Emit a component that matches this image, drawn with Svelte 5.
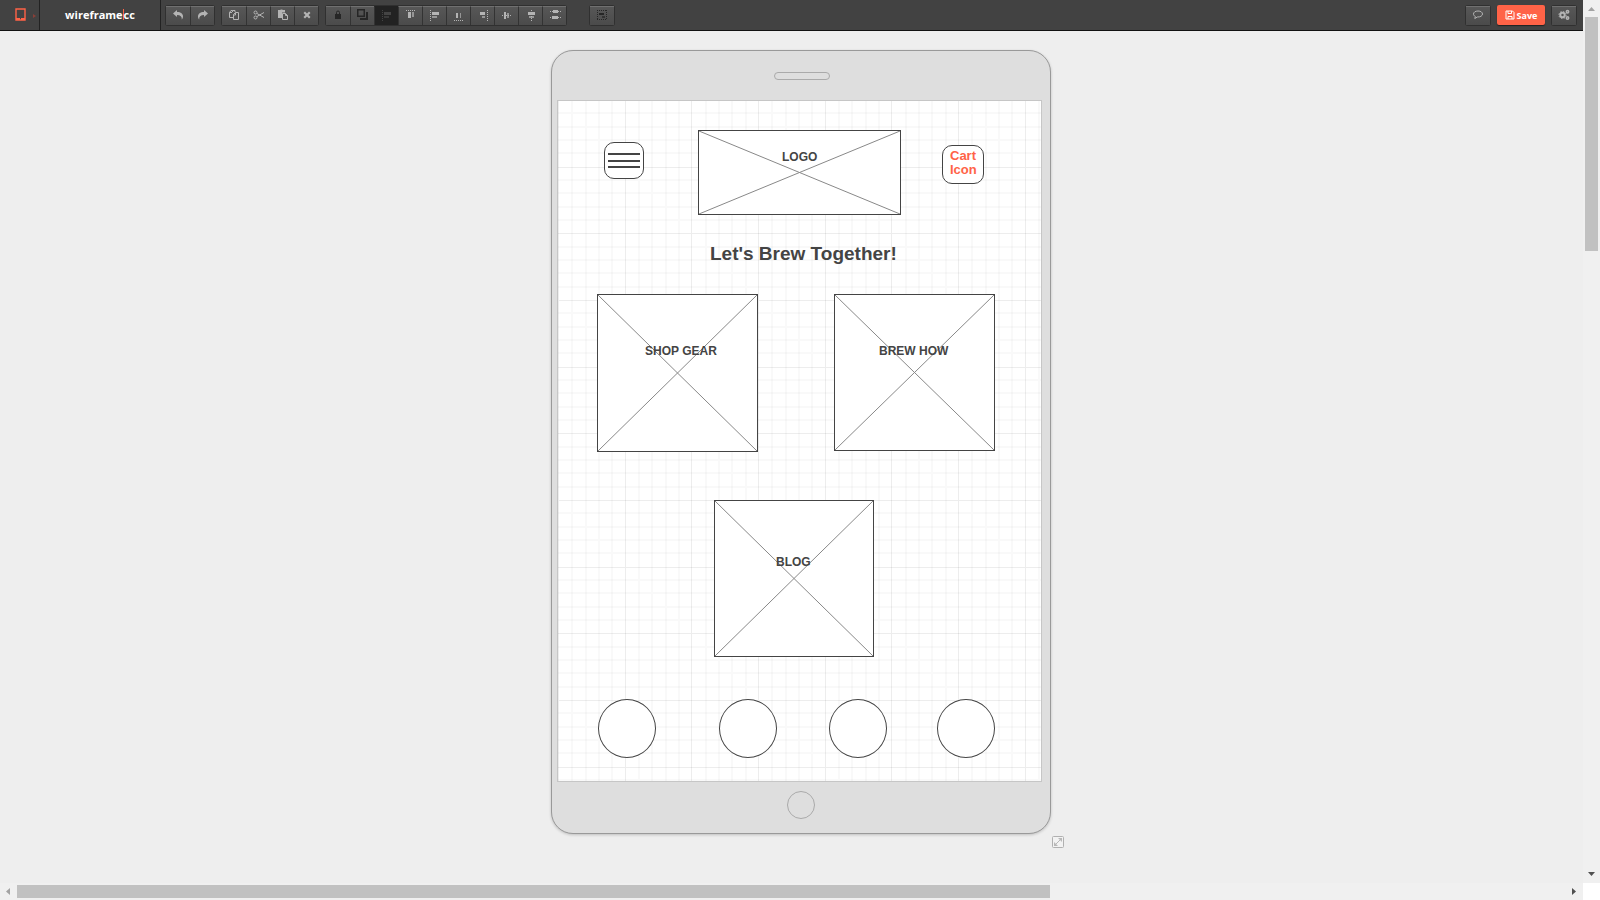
<script>
  const history = [
    { name: 'Undo', icon: 'undo' },
    { name: 'Redo', icon: 'redo' },
  ];
  const edit = [
    { name: 'Duplicate', icon: 'duplicate' },
    { name: 'Cut', icon: 'cut' },
    { name: 'Paste', icon: 'paste' },
    { name: 'Delete', icon: 'remove' },
  ];
  const arrange = [
    { name: 'Lock', icon: 'lock', off: true },
    { name: 'Bring to front', icon: 'layers', off: true },
    { name: 'Snap', icon: 'left', active: true },
    { name: 'Align top', icon: 'top' },
    { name: 'Align left', icon: 'left' },
    { name: 'Align bottom', icon: 'bottom' },
    { name: 'Align right', icon: 'right' },
    { name: 'Align middle', icon: 'middle' },
    { name: 'Align center', icon: 'center' },
    { name: 'Distribute', icon: 'distribute' },
  ];
  const group = [{ name: 'Group', icon: 'group', off: true }];
  const groups = [history, edit, arrange, group];

  const images = [
    { label: 'LOGO', x: 140, y: 29, w: 203, h: 85, tx: 83, ty: 19 },
    { label: 'SHOP GEAR', x: 39, y: 193, w: 161, h: 158, tx: 47, ty: 49 },
    { label: 'BREW HOW', x: 276, y: 193, w: 161, h: 157, tx: 44, ty: 49 },
    { label: 'BLOG', x: 156, y: 399, w: 160, h: 157, tx: 61, ty: 54 },
  ];
  const circles = [40, 161, 271, 379];

  const tile = 200;
  const minor = [13, 27, 40, 53, 80, 93, 107, 120, 147, 160, 173, 187];
  const major = [0, 67, 133];
</script>

{#snippet glyph(name)}
  <svg class="glyph" viewBox="0 0 12 12" aria-hidden="true">
    {#if name === 'undo'}
      <path d="M1 4.500 5 1v2c4 0 6 2 6 4.500 0 1.400-.6 2.300-1.200 3C10 7.500 8.500 6 5 6v2z" />
    {:else if name === 'redo'}
      <path d="M11 4.500 7 1v2C3 3 1 5 1 7.500c0 1.400.6 2.300 1.200 3C2 7.500 3.500 6 7 6v2z" />
    {:else if name === 'duplicate'}
      <path class="line" d="M4.500 3V1.500H3L1.500 3.500v5H5M1.500 3.500h2.500M5.500 5.500 7.500 3.500h3v7h-5zM5.500 6h2V3.500M4.500 1.500H7V3" />
    {:else if name === 'cut'}
      <path class="line" d="M4 4.500 11 8.500M4 7.500 11 3.500" />
      <circle class="line" cx="2.500" cy="3.500" r="1.500" /><circle class="line" cx="2.500" cy="8.500" r="1.500" />
    {:else if name === 'paste'}
      <path d="M1 1h2.500V0.500h2V1H8v2.500H5V9H1z" />
      <path class="line" d="M5.500 4.500h3l2 2v4h-5zM8.500 4.500v2h2" />
    {:else if name === 'remove'}
      <path d="M2.500 4 4 2.500l2 2 2-2L9.500 4l-2 2 2 2L8 9.500l-2-2-2 2L2.500 8l2-2z" />
    {:else if name === 'lock'}
      <path d="M3 5h6v5H3z" /><path class="line" d="M4.500 5V3.500a1.500 1.500 0 0 1 3 0V5" />
    {:else if name === 'layers'}
      <path d="M9 3h2v8H3V9h6z" /><path d="M0 0h8v8H0zM1.500 1.500v5h5v-5z" fill-rule="evenodd" />
    {:else if name === 'left'}
      <path class="dots" d="M1.500 1v11" /><path d="M3 3h7v3H3z" /><path class="dim" d="M3 7h5v2H3z" />
    {:else if name === 'top'}
      <path class="dots" d="M1 1.500h10" /><path d="M3 3h3v6H3z" /><path class="dim" d="M7 3h2v5H7z" />
    {:else if name === 'bottom'}
      <path class="dots" d="M1 11.500h10" /><path d="M3 4h2v5H3z" /><path class="dim" d="M7 4h1v5H7z" />
    {:else if name === 'right'}
      <path class="dots" d="M10.500 1v11" /><path d="M3 3h5v3H3z" /><path class="dim" d="M5 7h3v2H5z" />
    {:else if name === 'middle'}
      <path class="dots" d="M1 6.500h10" /><path d="M3 3h2v7H3z" /><path class="dim" d="M6 4h2v5H6z" />
    {:else if name === 'center'}
      <path class="dots" d="M6.500 1v11" /><path d="M3 3h7v3H3z" /><path class="dim" d="M4 7h5v2H4z" />
    {:else if name === 'distribute'}
      <path class="dots" d="M1 2.500h11M1 8.500h11" /><path d="M4 1h5v3H4zM3 7h6v3H3z" />
    {:else if name === 'group'}
      <path class="dots" d="M1 1.500h10M1 10.500h10M1.500 1v10M10.500 1v10" /><path d="M3 4h5v2H3z" /><path class="dim" d="M6 7h3v2H6z" />
    {:else if name === 'comment'}
      <path class="line" d="M6 2C3.300 2 1.500 3.300 1.500 5c0 1 .7 1.900 1.800 2.400L2.800 9.500 5.300 8c3.200.2 5.200-1.300 5.200-3S8.700 2 6 2z" />
    {:else if name === 'save'}
      <path class="line" d="M1 2h6.500L9 3.500V10H1zM3 2v2.500h3.500V2M3 10V7.500h4V10" />
    {:else if name === 'gears'}
      <circle class="line thick" cx="4.500" cy="6" r="2.200" /><circle class="line toothed" cx="4.500" cy="6" r="3.600" />
      <circle class="line heavy" cx="9.500" cy="2.800" r="1.200" /><circle class="line heavy" cx="9.500" cy="9" r="1.200" />
    {/if}
  </svg>
{/snippet}

<div class="app">
  <header>
    <button class="device-picker" aria-label="Choose device">
      <svg width="24" height="14" viewBox="0 0 24 14" aria-hidden="true">
        <path d="M1 1h9v11H1z" fill="none" stroke="#ff6347" stroke-width="1.400" />
        <path d="M1 10h4v2H1zM6 10h4v2H6z" fill="#ff6347" />
        <path d="M18 6v4l3-2z" fill="#8a4038" />
      </svg>
    </button>
    <a class="brand" href="#home">wireframe<i></i>cc</a>
    <nav aria-label="Tools">
      {#each groups as items}
        <div class="group">
          {#each items as item}
            <button class:off={item.off} class:active={item.active} aria-label={item.name}>{@render glyph(item.icon)}</button>
          {/each}
        </div>
      {/each}
    </nav>
    <div class="actions">
      <div class="group"><button aria-label="Comment">{@render glyph('comment')}</button></div>
      <button class="save">{@render glyph('save')}Save</button>
      <div class="group"><button aria-label="Settings">{@render glyph('gears')}</button></div>
    </div>
  </header>

  <main>
    <div class="device">
      <div class="bezel top"><span class="speaker"></span></div>
      <div class="screen">
        <svg class="grid" aria-hidden="true">
          <defs>
            <pattern id="grid" y="-1" width={tile} height={tile} patternUnits="userSpaceOnUse">
              {#each minor as m}
                <path d="M{m} 0h2v{tile}h-2zM0 {m - 1}h{tile}v2H0z" fill="#000" fill-opacity=".025" />
              {/each}
              {#each major as m}
                <path d="M{m} 0h1v{tile}h-1zM0 {m}h{tile}v1H0z" fill="#000" fill-opacity=".07" />
              {/each}
            </pattern>
          </defs>
          <rect width="100%" height="100%" fill="url(#grid)" />
        </svg>

        <div class="shape menu"><i></i><i></i><i></i></div>
        <div class="shape cart">Cart<br />Icon</div>
        <h1>Let's Brew Together!</h1>

        {#each images as b}
          <div class="shape" style="left:{b.x}px;top:{b.y}px;width:{b.w}px;height:{b.h}px">
            <svg class="cross" viewBox="0 0 100 100" preserveAspectRatio="none" aria-hidden="true">
              <path d="M0 0 100 100M0 100 100 0" />
            </svg>
            <span class="label" style="left:{b.tx}px;top:{b.ty}px">{b.label}</span>
          </div>
        {/each}

        {#each circles as x}
          <div class="shape circle" style="left:{x}px"></div>
        {/each}
      </div>
      <div class="bezel bottom"><span class="home"></span></div>
      <button class="resize" aria-label="Resize">
        <svg viewBox="0 0 12 12" aria-hidden="true">
          <rect x=".5" y=".5" width="11" height="11" rx="1" fill="#f2f2f2" stroke="#b0b0b0" />
          <path d="M3 9 9 3" stroke="#b8b8b8" />
          <path d="M6 2h4v4zM2 6v4h4z" fill="#b8b8b8" />
        </svg>
      </button>
    </div>
  </main>

  <div class="vbar">
    <svg viewBox="0 0 17 17" aria-hidden="true"><path d="M5 11h7L8.500 7z" fill="#a3a3a3" /></svg>
    <div class="track"><div class="thumb"></div></div>
    <svg viewBox="0 0 17 17" aria-hidden="true"><path d="M5 6h7L8.500 10z" fill="#505050" /></svg>
  </div>
  <div class="hbar">
    <svg viewBox="0 0 17 17" aria-hidden="true"><path d="M10 5v7L6 8.500z" fill="#a3a3a3" /></svg>
    <div class="track"><div class="thumb"></div></div>
    <svg viewBox="0 0 17 17" aria-hidden="true"><path d="M6 5v7l4-3.500z" fill="#505050" /></svg>
  </div>
</div>

<style>
  :global(body) { margin: 0; background: #fff; }
  * { box-sizing: border-box; }
  button { margin: 0; padding: 0; border: 0; background: none; font: inherit; }

  .app {
    display: grid;
    grid-template: auto 1fr 17px / 1fr 17px;
    height: 100vh;
    font-family: "Liberation Sans", Arial, sans-serif;
    color: #444;
  }

  header {
    display: flex;
    height: 31px;
    background: #424242;
    border-bottom: 1px solid #111;
  }
  .device-picker {
    display: flex;
    align-items: center;
    width: 40px;
    padding-left: 15px;
    border-right: 1px solid #222;
  }
  .brand {
    display: flex;
    align-items: center;
    justify-content: center;
    width: 121px;
    border-right: 1px solid #222;
    padding-bottom: 1px;
    color: #fff;
    font: 700 11px "Open Sans", sans-serif;
    text-decoration: none;
  }
  .brand i { width: 1px; height: 11px; background: #ff6347; }
  nav { display: flex; align-items: center; gap: 8px; padding-left: 5px; }
  nav .group:last-child { margin-left: 16px; }
  .group {
    display: flex;
    height: 19px;
    border-radius: 2px;
    box-shadow: 0 0 0 1px #303030;
  }
  .group button {
    display: flex;
    align-items: center;
    justify-content: center;
    width: 24px;
    padding-bottom: 2px;
    background: linear-gradient(#575757, #4b4b4b);
    border-top: 1px solid #707070;
    color: #b4b4b4;
  }
  .group button + button { border-left: 1px solid #333; }
  .group button.off { color: #262626; }
  .group button.active { background: #222; border-top-color: #222; color: #444; }
  .actions { display: flex; align-items: center; gap: 7px; margin-left: auto; padding-right: 7px; }
  .save {
    display: flex;
    align-items: center;
    justify-content: center;
    width: 48px;
    height: 20px;
    border-radius: 2px;
    background: #ff6347;
    box-shadow: 0 1px 1px #222;
    color: #fff;
    font: 700 9px "Open Sans", sans-serif;
  }
  .glyph { width: 12px; height: 12px; flex: none; fill: currentColor; }
  .line { fill: none; stroke: currentColor; }
  .thick { stroke-width: 2; }
  .heavy { stroke-width: 1.500; }
  .toothed { stroke-dasharray: 1.400 1.427; }
  .dots { fill: none; stroke: currentColor; stroke-dasharray: 1 1; }
  .dim { opacity: .7; }

  main {
    display: flex;
    justify-content: center;
    align-items: flex-start;
    grid-row: 2;
    grid-column: 1;
    padding: 19px 0 0 19px;
    overflow: hidden;
    background: #eee;
  }
  .device {
    position: relative;
    flex: none;
    padding: 0 8px 0 5px;
    border: 1px solid #999;
    border-radius: 22px;
    background: #dedede;
    box-shadow: 0 1px 3px rgba(0, 0, 0, .2);
  }
  .bezel { display: flex; justify-content: center; }
  .top { height: 49px; align-items: center; padding-left: 4px; }
  .bottom { height: 51px; padding-top: 9px; padding-left: 3px; }
  .speaker { width: 56px; height: 8px; border: 1px solid #aaa; border-radius: 4px; }
  .home { width: 28px; height: 28px; border: 1px solid #aaa; border-radius: 50%; }
  .resize { position: absolute; right: -14px; bottom: -15px; width: 12px; height: 12px; }
  .resize svg { display: block; }

  .screen {
    position: relative;
    width: 485px;
    height: 682px;
    border: 1px solid #c6c6c6;
    background: #fff;
  }
  .grid { position: absolute; width: 100%; height: 100%; }
  .shape { position: absolute; border: 1px solid #444; background: #fff; }
  .cross { display: block; width: 100%; height: 100%; }
  .cross path { stroke: #888; vector-effect: non-scaling-stroke; }
  .label { position: absolute; font-size: 12px; font-weight: 700; line-height: 14px; white-space: nowrap; }
  .menu {
    left: 46px;
    top: 41px;
    width: 40px;
    height: 37px;
    display: flex;
    flex-direction: column;
    justify-content: space-between;
    padding: 10px 3px;
    border-radius: 10px;
  }
  .menu i { height: 2px; background: #444; }
  .cart {
    left: 384px;
    top: 44px;
    width: 42px;
    height: 39px;
    padding: 3px 7px;
    border-radius: 10px;
    color: #ff6347;
    font-size: 13px;
    font-weight: 700;
    line-height: 14px;
  }
  h1 {
    position: absolute;
    left: 152px;
    top: 142px;
    margin: 0;
    font-size: 19px;
    line-height: 22px;
    white-space: nowrap;
  }
  .circle { top: 598px; width: 58px; height: 59px; border-radius: 50%; }

  .vbar, .hbar { display: flex; background: #f0f0f0; }
  .vbar { grid-row: 1 / 3; grid-column: 2; flex-direction: column; }
  .hbar { grid-row: 3; grid-column: 1; }
  .vbar svg, .hbar svg { width: 17px; height: 17px; flex: none; }
  .track { flex: 1; }
  .thumb { background: #c1c1c1; }
  .vbar .thumb { height: 27.600%; margin: 0 2px; }
  .hbar .track { padding: 2px 0; }
  .hbar .thumb { width: 66.700%; height: 13px; }
</style>
